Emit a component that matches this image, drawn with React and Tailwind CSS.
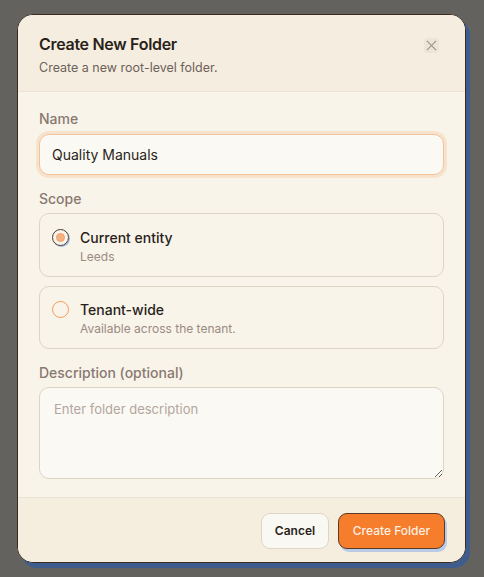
export default function App() {
  return (
    <div className="w-[484px] h-[577px] bg-[#64625e] overflow-hidden relative" style={{ fontFamily: "Inter, 'Noto Sans', sans-serif" }}>
      <div className="absolute left-[17px] top-[14px] w-[449px] h-[549px] rounded-[16px] border-[1.5px] border-[#3a2a22] bg-[#f8f4ea] shadow-[4px_5px_0_#3f5d8c] overflow-hidden flex flex-col">
        <div className="bg-[#f5eee0] border-b border-[#ebe3d4] px-[21px] pt-[18px] h-[77px] relative shrink-0">
          <div className="text-[16px] font-semibold text-[#2a1f1a] leading-[22px] tracking-[-0.3px]">Create New Folder</div>
          <div className="text-[12.5px] text-[#6e605a] leading-[18px] mt-[4px]">Create a new root-level folder.</div>
          <button className="absolute right-[26px] top-[23px] w-[15px] h-[15px] rounded-[3px] bg-[#ede5d8] flex items-center justify-center text-[#a3968e]">
            <svg viewBox="0 0 12 12" width="11" height="11" fill="none" stroke="currentColor" strokeWidth="1.4">
              <path d="M1 1L11 11M11 1L1 11" />
            </svg>
          </button>
        </div>
        <div className="px-[21px] pt-[17px] flex-1 min-h-0">
          <div className="text-[14px] font-medium text-[#8a7870] leading-[20px]">Name</div>
          <div className="mt-[5px] h-[41px] rounded-[10px] border border-[#f2c29c] bg-[#fbf9f3] shadow-[0_0_0_3px_#f7e2cc] flex items-center px-[12px] text-[14px] text-[#2a1f1a]">Quality Manuals</div>
          <div className="mt-[14px] text-[14px] font-medium text-[#8a7870] leading-[20px]">Scope</div>
          <div className="mt-[4px] h-[64px] rounded-[10px] border border-[#ddd4c4] flex items-start px-[12px] pt-[15px] gap-[11px]">
            <div className="w-[17px] h-[17px] rounded-full border-[1.5px] border-[#4a3a32] flex items-center justify-center shadow-[1px_1px_0_#9dbbe6] shrink-0">
              <div className="w-[9px] h-[9px] rounded-full bg-[#f5b184] border border-[#f0a06a]"></div>
            </div>
            <div className="-mt-[1px]">
              <div className="text-[14px] font-medium text-[#2a1f1a] leading-[20px]">Current entity</div>
              <div className="text-[12px] text-[#9b8a82] leading-[16px] mt-[1px]">Leeds</div>
            </div>
          </div>
          <div className="mt-[9px] h-[63px] rounded-[10px] border border-[#ddd4c4] flex items-start px-[12px] pt-[14px] gap-[11px]">
            <div className="w-[17px] h-[17px] rounded-full border-[1.5px] border-[#f39a5a] shrink-0"></div>
            <div className="-mt-[1px]">
              <div className="text-[14px] font-medium text-[#2a1f1a] leading-[20px]">Tenant-wide</div>
              <div className="text-[12px] text-[#9b8a82] leading-[16px] mt-[1px]">Available across the tenant.</div>
            </div>
          </div>
          <div className="mt-[14px] text-[14px] font-medium text-[#8a7870] leading-[20px]">Description (optional)</div>
          <textarea
            className="mt-[4px] block w-full h-[92px] rounded-[10px] border border-[#ddd4c4] bg-[#fbf9f3] px-[14px] py-[12px] text-[13px] text-[#2a1f1a] placeholder:text-[#b3a59e] outline-none resize-y"
            placeholder="Enter folder description"
            style={{ fontFamily: "Inter, 'Noto Sans', sans-serif" }}
          />
        </div>
        <div className="bg-[#f5eedf] border-t border-[#ebe3d4] h-[65px] shrink-0 flex items-start justify-end gap-[9px] px-[20px] pt-[15px]">
          <button className="h-[36px] w-[68px] rounded-[9px] border border-[#ddd4c4] bg-[#faf8f2] text-[12px] font-semibold text-[#2a1f1a]">Cancel</button>
          <button className="h-[36px] w-[107px] rounded-[9px] border border-[#5a3a28] bg-[#f57d2c] text-[12px] font-medium text-[#fdf0e4] shadow-[2px_3px_0_#b9cbe6]">Create Folder</button>
        </div>
      </div>
    </div>
  );
}
